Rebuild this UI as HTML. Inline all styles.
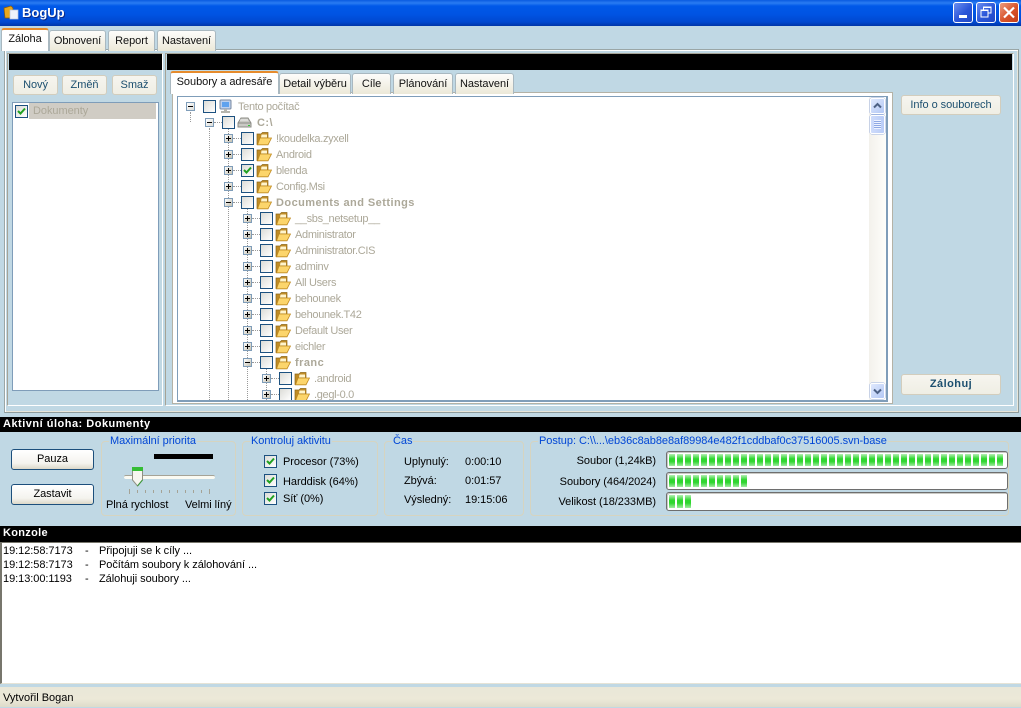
<!DOCTYPE html>
<html><head><meta charset="utf-8"><title>BogUp</title>
<style>
html,body{margin:0;padding:0;width:1021px;height:708px;overflow:hidden;background:#c0d8e4}
body{position:relative;font:11px/13px "Liberation Sans","DejaVu Sans",sans-serif;letter-spacing:-.05px;color:#000}
div,span{position:absolute;box-sizing:border-box;white-space:nowrap}
svg{position:absolute;display:block}
.tab{background:linear-gradient(#fdfdfb,#ece9d8);border:1px solid #a9b8c0;border-bottom:0;border-radius:3px 3px 0 0;text-align:center;line-height:20px;height:21px;color:#111}
.tab.on{background:#fff;border-top:2px solid #e68b2c;border-color:#e68b2c #a9b8c0 #fff;z-index:3;line-height:18px;height:23px}
.btn{background:linear-gradient(#f6f5ef,#efeee4);border:1px solid #d2cdbd;border-radius:3px;text-align:center;color:#1c4f6f}
.blk{background:#000;color:#fff;font-weight:bold;letter-spacing:.5px}
.r{height:16px;width:300px;letter-spacing:-.32px}
.e{left:0;top:3px;width:9px;height:9px;border:1px solid #7f9db9;background:linear-gradient(135deg,#fff,#c4c0b0)}
.e:before{content:"";position:absolute;left:1px;top:3px;width:5px;height:1px;background:#000}
.e.p:after{content:"";position:absolute;left:3px;top:1px;width:1px;height:5px;background:#000}
.h{left:9px;top:7px;width:8px;border-top:1px dotted #999}
.c{left:17px;top:1px;width:13px;height:13px;border:1px solid #1c5180;background:linear-gradient(135deg,#dcdcd7,#fff)}
.cb{width:13px;height:13px;border:1px solid #1c5180;background:linear-gradient(135deg,#dcdcd7,#fff)}
.k{left:1px;top:1px;width:9px;height:9px}
.f{left:32px;top:0;width:16px;height:15px}
.t{left:52px;top:2px;color:#aca899}
.b{font-weight:bold;letter-spacing:.45px}
.v{width:0;border-left:1px dotted #999}
.g{border:1px solid #d6d4c0;border-radius:4px}
.l{background:#c0d8e4;color:#0046d5;padding:0 1px;line-height:13px}
.pb{left:666px;width:342px;background:#fff;border:1px solid #6e6e6e;border-radius:3px;box-shadow:inset 1px 1px #c9c9c4}
.s{left:2px;top:2px;bottom:2px;background:repeating-linear-gradient(90deg,transparent 0,transparent 6px,#fff 6px,#fff 8px),linear-gradient(#b5efb5,#2fd62f 40%,#2fd62f 62%,#a0eaa0)}
.tk{top:490px;width:1px;height:3px;background:#a5a396}
</style></head><body>
<svg width="0" height="0" style="position:absolute"><defs>
<symbol id="fo" viewBox="0 0 16 15"><path d="M1 3H5L6.5 1.5H12V7H4L2 13.5H1Z" fill="#c08c26" stroke="#8f6818" stroke-width=".7"/><path d="M5.5 3.5H11V6.5H5Z" fill="#fff4cc"/><path d="M4 7H15.5L12 13.8H1.5Z" fill="#fcd56b" stroke="#c08a20" stroke-width=".8"/></symbol>
<symbol id="ck" viewBox="0 0 9 9"><path d="M1 4 L3.5 6.5 L8 1.5" fill="none" stroke="#21a121" stroke-width="2"/></symbol>
</defs></svg>

<!-- title bar -->
<div style="left:0;top:0;width:1021px;height:26px;background:linear-gradient(#0a5ae0 0,#2a7cf2 3px,#0058e8 6px,#0054e3 14px,#0048d0 22px,#0036a8 26px)"></div>
<svg style="left:3px;top:5px" width="16" height="15" viewBox="0 0 16 15"><path d="M1 3 L8 1 L10 3 L9 13 L2 13Z" fill="#e8a81e" stroke="#8a5c08" stroke-width=".7"/><rect x="7" y="5" width="8" height="9" fill="#eef2fb" stroke="#b9c6dc" stroke-width=".7"/></svg>
<div style="left:22px;top:5px;color:#fff;font:bold 13px/16px 'Liberation Sans',sans-serif;letter-spacing:0;text-shadow:1px 1px #0a2a88">BogUp</div>
<div style="left:953px;top:2px;width:20px;height:21px;background:linear-gradient(135deg,#6c8ff0,#2a55d8 55%,#2148c4);border:1px solid #fff;border-radius:3px"></div>
<div style="left:959px;top:15px;width:8px;height:3px;background:#fff"></div>
<div style="left:976px;top:2px;width:20px;height:21px;background:linear-gradient(135deg,#6c8ff0,#2a55d8 55%,#2148c4);border:1px solid #fff;border-radius:3px"></div>
<svg style="left:980px;top:6px" width="12" height="13" viewBox="0 0 12 13"><path d="M3.5 3.5V1H11V7H8.5M1 4H8V11H1Z M1 4.5H8 M3.5 1.5H11" fill="none" stroke="#fff"/></svg>
<div style="left:999px;top:2px;width:20px;height:21px;background:linear-gradient(135deg,#eb9c80,#d8532a 55%,#c23d18);border:1px solid #fff;border-radius:3px"></div>
<svg style="left:1003px;top:6px" width="12" height="13" viewBox="0 0 12 13"><path d="M1 1.5 L11 11.5 M11 1.5 L1 11.5" stroke="#fff" stroke-width="2.2"/></svg>

<!-- main tabs -->
<div style="left:4px;top:49px;width:1015px;height:364px;border:1px solid #9aa6a6;border-right-color:#8f9c9c;border-bottom-color:#8f9c9c;box-shadow:inset 1px 1px #fff,inset -1px -1px #e8e6da"></div>
<div class="tab on" style="left:1px;top:28px;width:48px">Záloha</div>
<div class="tab" style="left:49px;top:30px;width:57px">Obnovení</div>
<div class="tab" style="left:108px;top:30px;width:47px">Report</div>
<div class="tab" style="left:157px;top:30px;width:59px">Nastavení</div>

<!-- left group -->
<div style="left:7px;top:53px;width:156px;height:353px;border:1px solid #fff;border-top-color:#a5a396;border-left-color:#a5a396"></div>
<div class="blk" style="left:9px;top:54px;width:153px;height:16px"></div>
<div class="btn" style="left:13px;top:75px;width:45px;height:20px;line-height:18px">Nový</div>
<div class="btn" style="left:62px;top:75px;width:45px;height:20px;line-height:18px">Změň</div>
<div class="btn" style="left:112px;top:75px;width:45px;height:20px;line-height:18px">Smaž</div>
<div style="left:12px;top:102px;width:147px;height:289px;background:#fff;border:1px solid #7f9db9"></div>
<div style="left:29px;top:103px;width:127px;height:16px;background:#d0ccc4;color:#aca899;padding:2px 4px">Dokumenty</div>
<div class="cb" style="left:15px;top:105px"><svg class="k" style="left:1px;top:1px" width="9" height="9"><use href="#ck"/></svg></div>

<!-- right group -->
<div style="left:165px;top:53px;width:849px;height:353px;border:1px solid #fff;border-top-color:#a5a396;border-left-color:#a5a396"></div>
<div class="blk" style="left:167px;top:54px;width:845px;height:16px"></div>
<div style="left:172px;top:92px;width:721px;height:312px;background:#fff;border:1px solid #b4b2a6"></div>
<div class="tab on" style="left:170px;top:71px;width:109px;">Soubory a adresáře</div>
<div class="tab" style="left:279px;top:73px;width:72px">Detail výběru</div>
<div class="tab" style="left:352px;top:73px;width:39px">Cíle</div>
<div class="tab" style="left:393px;top:73px;width:60px">Plánování</div>
<div class="tab" style="left:455px;top:73px;width:59px">Nastavení</div>

<!-- tree -->
<div style="left:177px;top:96px;width:711px;height:306px;border:1px solid #7f9db9;border-width:1px 2px 2px 1px;background:#fff;overflow:hidden">
<div style="left:0;top:1px;width:692px;height:302px;overflow:hidden">
<div class="v" style="left:31px;top:30px;height:274px"></div>
<div class="v" style="left:50px;top:30px;height:274px"></div>
<div class="v" style="left:69px;top:110px;height:194px"></div>
<div class="v" style="left:88px;top:270px;height:34px"></div>
<div class="v" style="left:12px;top:14px;height:10px"></div>

<div class="r" style="left:8px;top:1px"><div class="e" style="background:linear-gradient(135deg,#fff,#dcdcd7)"></div><div class="c"></div>
<svg class="f" width="16" height="15" viewBox="0 0 16 15"><rect x="2" y="1" width="11" height="9" rx="1" fill="#bcd0ee" stroke="#7a8aa0"/><rect x="4" y="3" width="7" height="5" fill="#5fa2ee"/><path d="M6 10h3v2H6zM3 12h9v2H3z" fill="#b5b5ae"/></svg><div class="t">Tento počítač</div></div>

<div class="r" style="left:27px;top:17px"><div class="e" style="background:linear-gradient(135deg,#fff,#dcdcd7)"></div><div class="h"></div><div class="c"></div>
<svg class="f" width="16" height="15" viewBox="0 0 16 15"><path d="M4 3H11L14 8V12H1V8Z" fill="#c9c9c4" stroke="#8c8c86"/><path d="M1 8H14" stroke="#8c8c86"/><path d="M3 5H11" stroke="#eee"/><rect x="11" y="10" width="2" height="1" fill="#3c3"/></svg><div class="t b">C:\</div></div>

<div class="r" style="left:46px;top:33px"><div class="e p"></div><div class="h"></div><div class="c"></div><svg class="f" width="16" height="15"><use href="#fo"/></svg><div class="t">!koudelka.zyxell</div></div>
<div class="r" style="left:46px;top:49px"><div class="e p"></div><div class="h"></div><div class="c"></div><svg class="f" width="16" height="15"><use href="#fo"/></svg><div class="t">Android</div></div>
<div class="r" style="left:46px;top:65px"><div class="e p"></div><div class="h"></div><div class="c"><svg class="k" width="9" height="9"><use href="#ck"/></svg></div><svg class="f" width="16" height="15"><use href="#fo"/></svg><div class="t">blenda</div></div>
<div class="r" style="left:46px;top:81px"><div class="e p"></div><div class="h"></div><div class="c"></div><svg class="f" width="16" height="15"><use href="#fo"/></svg><div class="t">Config.Msi</div></div>
<div class="r" style="left:46px;top:97px"><div class="e"></div><div class="h"></div><div class="c"></div><svg class="f" width="16" height="15"><use href="#fo"/></svg><div class="t b">Documents and Settings</div></div>

<div class="r" style="left:65px;top:113px"><div class="e p"></div><div class="h"></div><div class="c"></div><svg class="f" width="16" height="15"><use href="#fo"/></svg><div class="t">__sbs_netsetup__</div></div>
<div class="r" style="left:65px;top:129px"><div class="e p"></div><div class="h"></div><div class="c"></div><svg class="f" width="16" height="15"><use href="#fo"/></svg><div class="t">Administrator</div></div>
<div class="r" style="left:65px;top:145px"><div class="e p"></div><div class="h"></div><div class="c"></div><svg class="f" width="16" height="15"><use href="#fo"/></svg><div class="t">Administrator.CIS</div></div>
<div class="r" style="left:65px;top:161px"><div class="e p"></div><div class="h"></div><div class="c"></div><svg class="f" width="16" height="15"><use href="#fo"/></svg><div class="t">adminv</div></div>
<div class="r" style="left:65px;top:177px"><div class="e p"></div><div class="h"></div><div class="c"></div><svg class="f" width="16" height="15"><use href="#fo"/></svg><div class="t">All Users</div></div>
<div class="r" style="left:65px;top:193px"><div class="e p"></div><div class="h"></div><div class="c"></div><svg class="f" width="16" height="15"><use href="#fo"/></svg><div class="t">behounek</div></div>
<div class="r" style="left:65px;top:209px"><div class="e p"></div><div class="h"></div><div class="c"></div><svg class="f" width="16" height="15"><use href="#fo"/></svg><div class="t">behounek.T42</div></div>
<div class="r" style="left:65px;top:225px"><div class="e p"></div><div class="h"></div><div class="c"></div><svg class="f" width="16" height="15"><use href="#fo"/></svg><div class="t">Default User</div></div>
<div class="r" style="left:65px;top:241px"><div class="e p"></div><div class="h"></div><div class="c"></div><svg class="f" width="16" height="15"><use href="#fo"/></svg><div class="t">eichler</div></div>
<div class="r" style="left:65px;top:257px"><div class="e"></div><div class="h"></div><div class="c"></div><svg class="f" width="16" height="15"><use href="#fo"/></svg><div class="t b">franc</div></div>

<div class="r" style="left:84px;top:273px"><div class="e p"></div><div class="h"></div><div class="c"></div><svg class="f" width="16" height="15"><use href="#fo"/></svg><div class="t">.android</div></div>
<div class="r" style="left:84px;top:289px"><div class="e p"></div><div class="h"></div><div class="c"></div><svg class="f" width="16" height="15"><use href="#fo"/></svg><div class="t">.gegl-0.0</div></div>
</div>
<!-- scrollbar -->
<div style="left:691px;top:0;width:18px;height:304px;background:linear-gradient(90deg,#f3f1ec,#fefefb)"></div>
<div style="left:692px;top:1px;width:15px;height:16px;background:linear-gradient(135deg,#dfe8fd,#b3c8f5);border:1px solid #fff;border-radius:2px;box-shadow:0 0 0 .5px #9eb4e0"></div>
<svg style="left:695px;top:5px" width="9" height="7" viewBox="0 0 9 7"><path d="M1 5.5 L4.5 2 L8 5.5" fill="none" stroke="#4d6185" stroke-width="2"/></svg>
<div style="left:692px;top:18px;width:15px;height:19px;background:linear-gradient(90deg,#cfdcfb,#b9ccf7);border:1px solid #fff;border-radius:2px;box-shadow:0 0 0 .5px #9eb4e0"></div>
<div style="left:696px;top:23px;width:7px;height:9px;background:repeating-linear-gradient(#eef3ff 0,#eef3ff 1px,#8fa9e4 1px,#8fa9e4 2px)"></div>
<div style="left:692px;top:286px;width:15px;height:16px;background:linear-gradient(135deg,#dfe8fd,#b3c8f5);border:1px solid #fff;border-radius:2px;box-shadow:0 0 0 .5px #9eb4e0"></div>
<svg style="left:695px;top:291px" width="9" height="7" viewBox="0 0 9 7"><path d="M1 1.5 L4.5 5 L8 1.5" fill="none" stroke="#4d6185" stroke-width="2"/></svg>
</div>

<div class="btn" style="left:901px;top:95px;width:100px;height:20px;line-height:18px">Info o souborech</div>
<div class="btn" style="left:901px;top:374px;width:100px;height:21px;line-height:19px;font-weight:bold;letter-spacing:.45px">Zálohuj</div>

<!-- active -->
<div class="blk" style="left:0;top:417px;width:1021px;height:15px;padding-left:3px;line-height:15px">Aktivní úloha: Dokumenty</div>

<div style="left:11px;top:449px;width:83px;height:21px;border:1px solid #1c4f7c;border-radius:3px;background:linear-gradient(#fff,#f4f3ee 70%,#dcd8c8);text-align:center;line-height:19px">Pauza</div>
<div style="left:11px;top:484px;width:83px;height:21px;border:1px solid #1c4f7c;border-radius:3px;background:linear-gradient(#fff,#f4f3ee 70%,#dcd8c8);text-align:center;line-height:19px">Zastavit</div>

<div class="g" style="left:101px;top:441px;width:135px;height:75px"></div>
<div class="l" style="left:109px;top:435px">Maximální priorita</div>
<div style="left:154px;top:454px;width:59px;height:5px;background:#000"></div>
<div style="left:124px;top:475px;width:91px;height:4px;background:#fafaf2;border-top:1px solid #a5a396;border-radius:2px"></div>
<svg style="left:131px;top:466px" width="13" height="22" viewBox="0 0 13 22"><path d="M1.5 1.5H11.5V14L6.5 20L1.5 14Z" fill="#f6f6f0" stroke="#8f8f82"/><path d="M1 1H12V5H1Z" fill="#35bd35"/><path d="M6.5 20L11.5 14" stroke="#3a9a3a"/></svg>
<div class="tk" style="left:129px;top:489px;height:5px"></div><div class="tk" style="left:137px"></div><div class="tk" style="left:145px"></div><div class="tk" style="left:153px"></div><div class="tk" style="left:161px"></div><div class="tk" style="left:169px"></div><div class="tk" style="left:177px"></div><div class="tk" style="left:185px"></div><div class="tk" style="left:193px"></div><div class="tk" style="left:201px"></div><div class="tk" style="left:209px;top:489px;height:5px"></div>
<div style="left:106px;top:499px">Plná rychlost</div>
<div style="left:185px;top:499px">Velmi líný</div>

<div class="g" style="left:242px;top:441px;width:136px;height:75px"></div>
<div class="l" style="left:250px;top:435px">Kontroluj aktivitu</div>
<div class="cb" style="left:264px;top:455px"><svg class="k" width="9" height="9"><use href="#ck"/></svg></div><div style="left:283px;top:456px">Procesor (73%)</div>
<div class="cb" style="left:264px;top:474px"><svg class="k" width="9" height="9"><use href="#ck"/></svg></div><div style="left:283px;top:476px">Harddisk (64%)</div>
<div class="cb" style="left:264px;top:492px"><svg class="k" width="9" height="9"><use href="#ck"/></svg></div><div style="left:283px;top:493px">Síť (0%)</div>

<div class="g" style="left:384px;top:441px;width:140px;height:75px"></div>
<div class="l" style="left:392px;top:435px">Čas</div>
<div style="left:404px;top:456px">Uplynulý:</div><div style="left:465px;top:456px">0:00:10</div>
<div style="left:404px;top:475px">Zbývá:</div><div style="left:465px;top:475px">0:01:57</div>
<div style="left:404px;top:494px">Výsledný:</div><div style="left:465px;top:494px">19:15:06</div>

<div class="g" style="left:530px;top:441px;width:479px;height:75px"></div>
<div class="l" style="left:538px;top:435px">Postup: C:\\...\eb36c8ab8e8af89984e482f1cddbaf0c37516005.svn-base</div>
<div style="right:365px;top:455px">Soubor (1,24kB)</div>
<div style="right:365px;top:476px">Soubory (464/2024)</div>
<div style="right:365px;top:496px">Velikost (18/233MB)</div>
<div class="pb" style="top:451px;height:18px"><div class="s" style="width:336px"></div></div>
<div class="pb" style="top:472px;height:18px"><div class="s" style="width:78px"></div></div>
<div class="pb" style="top:492px;height:19px"><div class="s" style="width:22px"></div></div>

<!-- console -->
<div class="blk" style="left:0;top:526px;width:1021px;height:16px;padding-left:3px;line-height:15px;letter-spacing:.3px">Konzole</div>
<div style="left:0;top:542px;width:1021px;height:142px;background:#fff;border-top:1px solid #77766c;border-left:2px solid #77766c;border-bottom:1px solid #e6e3d6"></div>
<div style="left:3px;top:545px">19:12:58:7173</div><div style="left:85px;top:545px">-</div><div style="left:99px;top:545px">Připojuji se k cíly ...</div>
<div style="left:3px;top:559px">19:12:58:7173</div><div style="left:85px;top:559px">-</div><div style="left:99px;top:559px">Počítám soubory k zálohování ...</div>
<div style="left:3px;top:573px">19:13:00:1193</div><div style="left:85px;top:573px">-</div><div style="left:99px;top:573px">Zálohuji soubory ...</div>

<!-- status -->
<div style="left:0;top:687px;width:1021px;height:20px;background:linear-gradient(#e9e7d8,#ece9d8 60%,#dedbca);padding:5px 0 0 3px;letter-spacing:0">Vytvořil Bogan</div>
</body></html>
